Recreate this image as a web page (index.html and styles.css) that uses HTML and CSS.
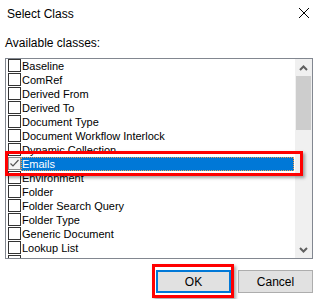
FILE: index.html
```html
<!DOCTYPE html>
<html>
<head>
<meta charset="utf-8">
<link rel="stylesheet" href="styles.css">
</head>
<body>
<div class="dialog">
  <div class="titlebar">
    <span class="title">Select Class</span>
    <svg class="close" width="12" height="12" viewBox="0 0 12 12"><path d="M1 1 L11 11 M11 1 L1 11" stroke="#000" stroke-width="1" fill="none"/></svg>
  </div>
  <div class="label">Available classes:</div>
  <div class="listbox">
    <div class="items">
      <div class="row"><span class="cb"></span><span class="txt">Baseline</span></div>
      <div class="row"><span class="cb"></span><span class="txt">ComRef</span></div>
      <div class="row"><span class="cb"></span><span class="txt">Derived From</span></div>
      <div class="row"><span class="cb"></span><span class="txt">Derived To</span></div>
      <div class="row"><span class="cb"></span><span class="txt">Document Type</span></div>
      <div class="row"><span class="cb"></span><span class="txt">Document Workflow Interlock</span></div>
      <div class="row"><span class="cb"></span><span class="txt">Dynamic Collection</span></div>
      <div class="row sel"><span class="cb checked"><svg width="11" height="11" viewBox="0 0 11 11"><path d="M1.5 5.5 L4 8 L9.5 2" stroke="#555" stroke-width="1.2" fill="none"/></svg></span><span class="txt">Emails</span></div>
      <div class="row"><span class="cb"></span><span class="txt">Environment</span></div>
      <div class="row"><span class="cb"></span><span class="txt">Folder</span></div>
      <div class="row"><span class="cb"></span><span class="txt">Folder Search Query</span></div>
      <div class="row"><span class="cb"></span><span class="txt">Folder Type</span></div>
      <div class="row"><span class="cb"></span><span class="txt">Generic Document</span></div>
      <div class="row"><span class="cb"></span><span class="txt">Lookup List</span></div>
      <div class="row"><span class="cb"></span><span class="txt">Master Period C</span></div>
    </div>
    <div class="scrollbar">
      <div class="arrow"><svg width="9" height="6" viewBox="0 0 9 6"><path d="M1 5 L4.5 1.5 L8 5" stroke="#606060" stroke-width="2" fill="none"/></svg></div>
      <div class="track"><div class="thumb"></div></div>
      <div class="arrow"><svg width="9" height="6" viewBox="0 0 9 6"><path d="M1 1 L4.5 4.5 L8 1" stroke="#606060" stroke-width="2" fill="none"/></svg></div>
    </div>
  </div>
  <div class="buttons">
    <div class="btn default">OK</div>
    <div class="btn">Cancel</div>
  </div>
  <div class="mark mark-row"></div>
  <div class="mark mark-ok"></div>
</div>
</body>
</html>
```

FILE: styles.css
```css
html, body {
  margin: 0;
  padding: 0;
  background: #fff;
}
.dialog {
  position: relative;
  width: 319px;
  height: 299px;
  overflow: hidden;
  font-family: "Liberation Sans", Arial, sans-serif;
  font-size: 12px;
  color: #000;
}
.titlebar {
  height: 30px;
  display: flex;
  align-items: center;
  justify-content: space-between;
  padding: 0 9px 0 7px;
  box-sizing: border-box;
}
.title {
  font-size: 12px;
  margin-top: -2px;
}
.close {
  margin-top: -4px;
}
.label {
  padding: 6px 0 0 5px;
  height: 22px;
  box-sizing: border-box;
}
.listbox {
  margin-left: 5px;
  width: 308px;
  height: 201px;
  border: 1px solid #828790;
  box-sizing: border-box;
  display: flex;
  margin-top: 6px;
}
.items {
  flex: 1;
  overflow: hidden;
  padding-left: 2px;
  font-size: 11px;
}
.row {
  height: 14px;
  display: flex;
  align-items: flex-start;
}
.cb {
  width: 13px;
  height: 13px;
  border: 1px solid #333;
  box-sizing: border-box;
  background: #fff;
  flex: none;
  display: flex;
  align-items: center;
  justify-content: center;
}
.cb.checked {
  border-color: #8a8a8a;
  background: #f4f4f4;
}
.txt {
  line-height: 14px;
  padding-left: 1px;
  white-space: nowrap;
}
.row.sel .txt {
  background: #0078d7;
  color: #fff;
  flex: 1;
  margin-right: 1px;
  outline: 1px dotted #f0a050;
  outline-offset: -1px;
}
.scrollbar {
  width: 17px;
  background: #f0f0f0;
  display: flex;
  flex-direction: column;
  flex: none;
}
.arrow {
  height: 17px;
  display: flex;
  align-items: center;
  justify-content: center;
}
.track {
  flex: 1;
}
.thumb {
  height: 54px;
  margin: 0 1px;
  background: #cdcdcd;
}
.buttons {
  display: flex;
  justify-content: flex-end;
  gap: 7px;
  padding: 11px 6px 0 0;
}
.btn {
  width: 75px;
  height: 23px;
  box-sizing: border-box;
  border: 1px solid #adadad;
  background: #e1e1e1;
  display: flex;
  align-items: center;
  justify-content: center;
  font-size: 12px;
}
.btn.default {
  border: 2px solid #0078d7;
}
.mark {
  position: absolute;
  border: 3px solid #ff0000;
  box-sizing: border-box;
  box-shadow: 2px 2px 3px rgba(0,0,0,0.35);
}
.mark-row {
  left: 5px;
  top: 151px;
  width: 298px;
  height: 25px;
}
.mark-ok {
  left: 152px;
  top: 264px;
  width: 82px;
  height: 34px;
}
```
